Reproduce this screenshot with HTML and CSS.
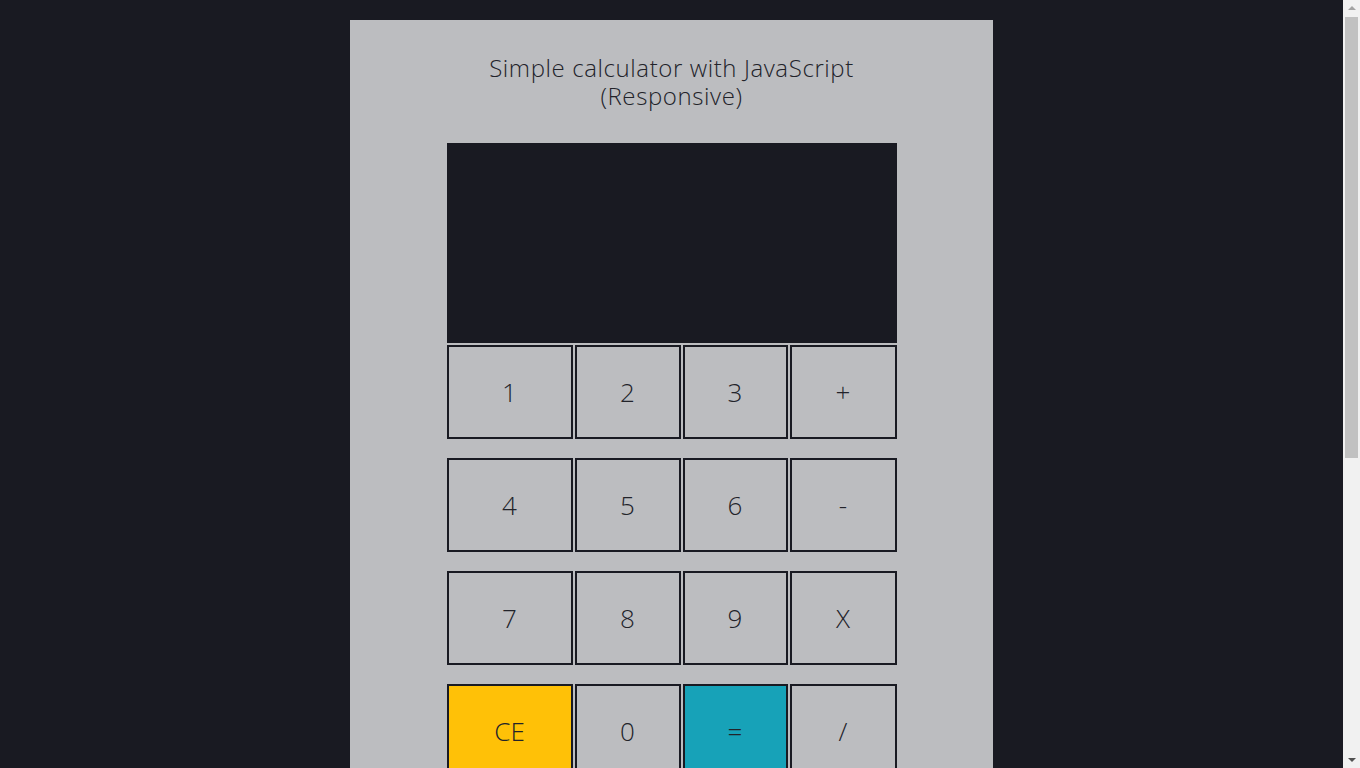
FILE: index.html
```html
<!DOCTYPE html>
<html lang="en">
<head>
<meta charset="utf-8">
<title>Simple calculator with JavaScript</title>
<link rel="stylesheet" href="styles.css">
</head>
<body>
<main class="card">
  <h1 class="title"><span class="title-line">Simple calculator with JavaScript</span> <span class="title-line">(Responsive)</span></h1>
  <div class="calc">
    <div class="display"></div>
    <div class="keys">
      <button class="key">1</button>
      <button class="key">2</button>
      <button class="key">3</button>
      <button class="key">+</button>
      <button class="key">4</button>
      <button class="key">5</button>
      <button class="key">6</button>
      <button class="key">-</button>
      <button class="key">7</button>
      <button class="key">8</button>
      <button class="key">9</button>
      <button class="key">X</button>
      <button class="key key-clear">CE</button>
      <button class="key">0</button>
      <button class="key key-equal">=</button>
      <button class="key">/</button>
    </div>
  </div>
</main>
<div class="scrollbar" aria-hidden="true">
  <span class="arrow arrow-up"></span>
  <span class="thumb"></span>
  <span class="arrow arrow-down"></span>
</div>
</body>
</html>
```
FILE: styles.css
```css
html, body {
  margin: 0;
  padding: 0;
}
body {
  background: #191a22;
  font-family: "Open Sans", "Lato", sans-serif;
  color: #191a22;
  padding-right: 17px;
  min-height: 1278px;
  box-sizing: border-box;
}
.card {
  width: 643px;
  margin: 20px auto 0;
  background: #bcbdc0;
  padding: 34px 0 60px;
  box-sizing: border-box;
}
.title {
  margin: 0 auto;
  font-size: 24px;
  font-weight: 300;
  line-height: 28px;
  letter-spacing: 0.6px;
  text-align: center;
  color: #22232a;
}
.title-line {
  display: block;
  height: 28px;
}
.calc {
  width: 450px;
  margin: 33px auto 0;
}
.display {
  height: 200px;
  background: #191a22;
}
.keys {
  margin-top: 2px;
  display: grid;
  grid-template-columns: 126px 106px 105px 107px;
  column-gap: 2px;
  row-gap: 19px;
}
.key {
  height: 94px;
  box-sizing: border-box;
  border: 2px solid #191a22;
  background: #bcbdc0;
  font-family: "Open Sans", "Lato", sans-serif;
  font-size: 26px;
  font-weight: 300;
  color: #22232a;
  padding: 0;
  margin: 0;
}
.key-clear {
  background: #ffc107;
}
.key-equal {
  background: #17a2b8;
}
.scrollbar {
  position: fixed;
  top: 0;
  right: 0;
  width: 17px;
  height: 100vh;
  background: #f1f1f1;
  display: flex;
  flex-direction: column;
  align-items: center;
}
.arrow {
  width: 0;
  height: 0;
  border-left: 4px solid transparent;
  border-right: 4px solid transparent;
  margin: 6px 0;
}
.arrow-up {
  border-bottom: 4px solid #a3a3a3;
}
.arrow-down {
  border-top: 4px solid #505050;
  margin-top: auto;
}
.thumb {
  width: 13px;
  height: 441px;
  margin-top: 1px;
  background: #c1c1c1;
}
```
